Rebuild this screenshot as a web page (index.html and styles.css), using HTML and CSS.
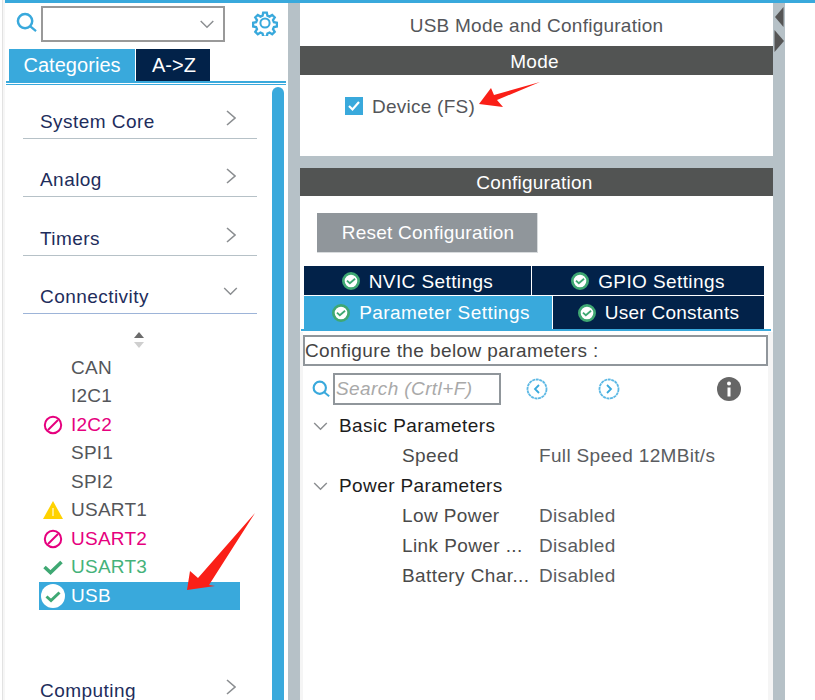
FILE: index.html
```html
<!DOCTYPE html>
<html lang="en">
<head>
<meta charset="utf-8">
<title>USB Mode and Configuration</title>
<link rel="stylesheet" href="styles.css">
</head>
<body>
<svg class="defs" width="0" height="0" aria-hidden="true">
  <symbol id="ok" viewBox="0 0 20 20"><circle cx="10" cy="10" r="8.500" fill="#fff" stroke="#3fa873" stroke-width="3"/><path d="M5.500 9.500l3.200 3 5.800-5" fill="none" stroke="#3fa873" stroke-width="2"/></symbol>
  <symbol id="ban" viewBox="0 0 20 20"><circle cx="10" cy="10" r="8.200" fill="none" stroke="#e6007e" stroke-width="2"/><path d="M5 15L15 5" stroke="#e6007e" stroke-width="2"/></symbol>
  <symbol id="right" viewBox="0 0 10 16"><path d="M1 1l8 7-8 7" fill="none" stroke="#8b8e91" stroke-width="1.600"/></symbol>
  <symbol id="down" viewBox="0 0 16 10"><path d="M1 1l7 7 7-7" fill="none" stroke="#8b8e91" stroke-width="1.600"/></symbol>
  <symbol id="mag" viewBox="0 0 22 22"><circle cx="9.500" cy="9.500" r="7.500" fill="none" stroke="#39a9dc" stroke-width="2.600"/><path d="M15 15l6 5" stroke="#39a9dc" stroke-width="2.400"/></symbol>
</svg>
<div class="app">
  <div class="edge"></div>
  <div class="shell">
    <div class="topbar"></div>
    <div class="panes">
      <aside class="sidebar">
        <div class="searchrow">
          <svg class="mag-lg"><use href="#mag"/></svg>
          <div class="combo"><svg class="combo-caret"><use href="#down"/></svg></div>
          <svg class="gear" viewBox="0 0 26 26">
            <circle cx="13" cy="13" r="4.600" fill="none" stroke="#39a9dc" stroke-width="2"/>
            <path d="M11 1.500h4l.7 3.400 2.300 1 3-1.900 2.800 2.800-1.900 3 1 2.300 3.400.7v4l-3.400.7-1 2.300 1.900 3-2.800 2.800-3-1.900-2.300 1-.7 3.400h-4l-.7-3.400-2.300-1-3 1.900-2.800-2.800 1.900-3-1-2.300-3.400-.7v-4l3.400-.7 1-2.300-1.900-3 2.800-2.800 3 1.900 2.300-1z" transform="translate(1.300 1.300) scale(.9)" fill="none" stroke="#39a9dc" stroke-width="2.600"/>
          </svg>
        </div>
        <div class="sidetabs">
          <div class="sidetab active">Categories</div>
          <div class="sidetab az">A-&gt;Z</div>
        </div>
        <div class="rule"></div>
        <div class="sidebody">
          <nav class="nav">
            <div class="cat"><span>System Core</span><svg class="chev"><use href="#right"/></svg></div>
            <div class="cat"><span>Analog</span><svg class="chev"><use href="#right"/></svg></div>
            <div class="cat"><span>Timers</span><svg class="chev"><use href="#right"/></svg></div>
            <div class="cat open"><span>Connectivity</span><svg class="chev-down"><use href="#down"/></svg></div>
            <div class="sorter">
              <svg width="12" height="16" viewBox="0 0 12 16"><path d="M6 0l5 6H1z" fill="#6b6b6b"/><path d="M6 16l5-6H1z" fill="#cfcfcf"/></svg>
            </div>
            <ul class="items">
              <li class="item"><span class="slot"></span>CAN</li>
              <li class="item"><span class="slot"></span>I2C1</li>
              <li class="item pink"><span class="slot"><svg class="ic"><use href="#ban"/></svg></span>I2C2</li>
              <li class="item"><span class="slot"></span>SPI1</li>
              <li class="item"><span class="slot"></span>SPI2</li>
              <li class="item"><span class="slot"><svg class="ic" viewBox="0 0 20 18"><path d="M10 0l10 18H0z" fill="#ffd200"/><path d="M10 7v8" stroke="#fff3b0" stroke-width="1.500"/></svg></span>USART1</li>
              <li class="item pink"><span class="slot"><svg class="ic"><use href="#ban"/></svg></span>USART2</li>
              <li class="item green"><span class="slot"><svg class="ic" viewBox="0 0 20 20"><path d="M1.500 10l6 5.500L18.500 5" fill="none" stroke="#3fa873" stroke-width="3.600"/></svg></span>USART3</li>
              <li class="item selected"><span class="slot"><svg class="ic-lg" viewBox="0 0 24 24"><circle cx="12" cy="12" r="12" fill="#fff"/><path d="M5.500 12.500l4.500 4 8.500-8" fill="none" stroke="#3fa873" stroke-width="3"/></svg></span>USB</li>
            </ul>
            <div class="cat computing"><span>Computing</span><svg class="chev"><use href="#right"/></svg></div>
          </nav>
          <div class="scrollthumb"></div>
        </div>
      </aside>

      <div class="divider"></div>

      <main class="main">
        <section class="card mode">
          <h1 class="title">USB Mode and Configuration</h1>
          <h2 class="bar">Mode</h2>
          <div class="modebody">
            <svg class="check" viewBox="0 0 18 18"><rect width="18" height="18" fill="#39a9dc"/><path d="M4 9l3.500 3.500L14 5" fill="none" stroke="#fff" stroke-width="2.200"/></svg>
            <span>Device (FS)</span>
          </div>
        </section>
        <section class="card config">
          <h2 class="bar">Configuration</h2>
          <div class="resetwrap"><button class="reset">Reset Configuration</button></div>
          <div class="tabrow first">
            <div class="tab nvic"><svg class="tabok"><use href="#ok"/></svg>NVIC Settings</div>
            <div class="tab gpio"><svg class="tabok"><use href="#ok"/></svg>GPIO Settings</div>
          </div>
          <div class="tabrow second">
            <div class="tab param active"><svg class="tabok"><use href="#ok"/></svg>Parameter Settings</div>
            <div class="tab user"><svg class="tabok"><use href="#ok"/></svg>User Constants</div>
          </div>
          <div class="tabrule"></div>
          <div class="params">
            <div class="hint">Configure the below parameters :</div>
            <div class="tools">
              <svg class="mag-sm"><use href="#mag"/></svg>
              <div class="search">Search (Crtl+F)</div>
              <svg class="nav-btn prev" viewBox="0 0 22 22"><circle cx="11" cy="11" r="9.500" fill="none" stroke="#5cb8e4" stroke-width="1.800" stroke-dasharray="3 .6"/><path d="M13 7l-4 4 4 4" fill="none" stroke="#39a9dc" stroke-width="1.800"/></svg>
              <svg class="nav-btn next" viewBox="0 0 22 22"><circle cx="11" cy="11" r="9.500" fill="none" stroke="#5cb8e4" stroke-width="1.800" stroke-dasharray="3 .6"/><path d="M9 7l4 4-4 4" fill="none" stroke="#39a9dc" stroke-width="1.800"/></svg>
              <svg class="info" viewBox="0 0 24 24"><circle cx="12" cy="12" r="12" fill="#666"/><circle cx="12" cy="6.500" r="2" fill="#fff"/><path d="M12 10.500v9" stroke="#fff" stroke-width="3"/></svg>
            </div>
            <div class="group"><svg class="group-caret"><use href="#down"/></svg>Basic Parameters</div>
            <div class="prop"><span class="key">Speed</span><span class="val">Full Speed 12MBit/s</span></div>
            <div class="group"><svg class="group-caret"><use href="#down"/></svg>Power Parameters</div>
            <div class="prop"><span class="key">Low Power</span><span class="val">Disabled</span></div>
            <div class="prop"><span class="key">Link Power ...</span><span class="val">Disabled</span></div>
            <div class="prop"><span class="key">Battery Char...</span><span class="val">Disabled</span></div>
          </div>
        </section>
      </main>

      <div class="gutter">
        <svg width="12" height="48" viewBox="0 0 12 48"><path d="M10.500 2v20L2 12z" fill="#555"/><path d="M1.500 25v22L11 36z" fill="#555"/></svg>
      </div>
      <div class="outer"></div>
    </div>
  </div>
</div>
<svg class="arrows" viewBox="0 0 815 700" aria-hidden="true">
  <path d="M479 104L491 88l3 7 46-13-43 18 6 7z" fill="#fa1f17"/>
  <path d="M187 590l3-19 8 7 57-65-46 72 6 1z" fill="#fa1f17"/>
</svg>
</body>
</html>
```
FILE: styles.css
```css
* { box-sizing: border-box; }
html, body { margin: 0; padding: 0; }
body {
  width: 815px;
  height: 700px;
  overflow: hidden;
  background: #fff;
  font-family: "Liberation Sans", Arial, sans-serif;
  font-size: 19px;
  letter-spacing: .25px;
  color: #54565a;
  position: relative;
}
.defs { position: absolute; }
.app { display: flex; height: 700px; padding-left: 2px; }
.edge { width: 3px; border-left: 1px solid #e2e2e2; background: #f6f6f6; flex: none; }
.shell { flex: 1; display: flex; flex-direction: column; min-width: 0; }
.topbar { height: 3px; background: #39a9dc; flex: none; }
.panes { flex: 1; display: flex; min-height: 0; }

/* sidebar */
.sidebar { width: 283px; flex: none; display: flex; flex-direction: column; background: #fff; }
.searchrow { display: flex; align-items: center; height: 36px; margin-top: 3px; padding-left: 11px; }
.mag-lg { width: 21px; height: 21px; margin: 0 4px 3px 0; flex: none; }
.combo { width: 184px; height: 36px; border: 2px solid #999; display: flex; align-items: center; justify-content: flex-end; padding-right: 8px; flex: none; }
.combo-caret { width: 16px; height: 9px; }
.gear { width: 26px; height: 26px; margin: 0 0 3px 27px; flex: none; }
.sidetabs { display: flex; margin-top: 7px; padding-left: 4px; gap: 1px; }
.sidetab { height: 32px; background: #022249; color: #fff; font-size: 20px; letter-spacing: .05px; line-height: 33px; text-align: center; width: 74px; }
.sidetab.az { padding-left: 2px; }
.sidetab.active { background: #39a9dc; width: 126px; }
.rule { height: 4px; margin: 0 2px 0 1px; border-top: 2px solid #39a9dc; border-bottom: 1px solid #39a9dc; flex: none; }
.sidebody { flex: 1; display: flex; min-height: 0; padding-left: 18px; }
.nav { width: 234px; flex: none; }
.scrollthumb { width: 12px; margin-left: 15px; margin-top: 2px; background: #39a9dc; border-radius: 6px 6px 0 0; flex: none; }
.cat { height: 58.500px; display: flex; align-items: flex-end; justify-content: space-between; padding: 0 21px 4px 17px; border-bottom: 1px solid #b6c1c7; color: #1e2d5c; line-height: 24px; letter-spacing: .45px; }
.cat:first-child { height: 53.500px; }
.cat.open { border-bottom-color: #9db4d8; }
.cat.computing { border-bottom: 0; margin-top: 38px; }
.chev { width: 10px; height: 16px; margin-bottom: 8px; }
.chev-down { width: 15px; height: 9px; margin: 0 -2px 13px 0; }
.sorter { height: 39.500px; padding-top: 18px; padding-left: 110px; }
.sorter svg { display: block; }
.items { list-style: none; margin: 0 0 0 16px; padding: 0; width: 201px; }
.item { height: 28.500px; display: flex; align-items: center; }
.slot { width: 32px; display: flex; align-items: center; justify-content: center; padding-right: 5px; flex: none; }
.ic { width: 20px; height: 20px; }
.ic-lg { width: 24px; height: 24px; }
.pink { color: #e6007e; }
.green { color: #45b27a; }
.selected { background: #39a9dc; color: #fff; }

/* main */
.divider { width: 12px; background: #b6c1c7; flex: none; }
.main { width: 473px; flex: none; background: #b6c1c7; display: flex; flex-direction: column; gap: 12px; }
.card { background: #fff; }
.title { margin: 0; height: 43px; font-size: 19px; font-weight: 400; line-height: 45px; text-align: center; }
.bar { margin: 0; background: #525453; color: #fff; font-size: 19px; font-weight: 400; text-align: center; padding-right: 4px; }
.mode .bar { height: 29px; line-height: 31px; }
.modebody { height: 81px; display: flex; align-items: flex-start; padding: 22px 0 0 45px; line-height: 20px; }
.check { width: 18px; height: 18px; margin-right: 9px; flex: none; }
.config { flex: 1; display: flex; flex-direction: column; min-height: 0; }
.config .bar { height: 28px; line-height: 30px; }
.resetwrap { padding: 17px 0 13px 17px; }
.reset { display: block; width: 221px; height: 40px; border: 0; border-right: 1px solid #d8dbdd; border-bottom: 1px solid #d8dbdd; background: #90969b; color: #fff; font: inherit; letter-spacing: inherit; padding: 0 0 0 2px; }
.tabrow { display: flex; margin-left: 4px; width: 460px; gap: 1px; }
.tabrow.first { height: 29px; margin-bottom: 1px; }
.tabrow.second { height: 33px; }
.tab { background: #022249; color: #fff; display: flex; align-items: center; justify-content: center; }
.tabrow.first .tab { padding-top: 3px; letter-spacing: .4px; }
.tab.nvic { width: 227px; }
.tab.gpio { width: 232px; }
.tab.param { width: 248px; background: #39a9dc; letter-spacing: .45px; padding-left: 6px; }
.tab.user { width: 211px; }
.tabok { width: 18px; height: 18px; margin: 0 9px 0 0; flex: none; }
.tabrow.first .tabok { margin-top: -3px; }
.tabrule { height: 2px; margin-left: 1px; width: 470px; background: #39a9dc; flex: none; }
.params { flex: 1; margin-top: 1px; padding: 3px 0 0 3px; letter-spacing: .4px; background: linear-gradient(to right, #f5f5f5 3px, #fff 3px, #fff 468px, #f5f5f5 468px); }
.hint { width: 465px; height: 31px; border: 2px solid #90969b; line-height: 28px; padding-left: 0; color: #444; }
.tools { display: flex; align-items: center; height: 32px; margin-top: 7px; padding-left: 9px; }
.mag-sm { width: 18px; height: 18px; margin-right: 3px; flex: none; }
.search { width: 168px; height: 32px; border: 2px solid #90969b; color: #a9a9a9; font-style: italic; line-height: 28px; padding-left: 1px; font-size: 19px; letter-spacing: .4px; flex: none; }
.nav-btn { width: 22px; height: 22px; flex: none; }
.prev { margin-left: 25px; }
.next { margin-left: 50px; }
.info { width: 24px; height: 24px; margin-left: 97px; flex: none; }
.group { height: 30px; display: flex; align-items: center; color: #1c1c1c; padding: 2px 0 0 10px; }
.tools + .group { margin-top: 5px; }
.group-caret { width: 15px; height: 9px; margin-right: 11px; flex: none; }
.prop { height: 30px; display: flex; align-items: center; padding: 2px 0 0 99px; }
.key { width: 137px; flex: none; color: #4a4a4a; }
.val { color: #5a5c60; letter-spacing: .33px; }

/* right side */
.gutter { width: 12px; background: #b6c1c7; flex: none; padding-top: 2px; }
.gutter svg { display: block; }
.outer { flex: 1; background: #fff; }

.arrows { position: absolute; left: 0; top: 0; width: 815px; height: 700px; pointer-events: none; }
```
